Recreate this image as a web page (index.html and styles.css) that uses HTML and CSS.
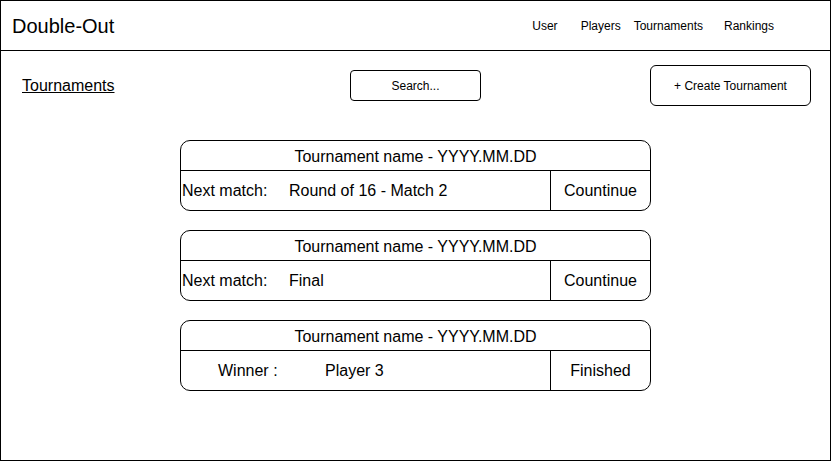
FILE: index.html
```html
<!DOCTYPE html>
<html>
<head>
<meta charset="utf-8">
<link rel="stylesheet" href="styles.css">
</head>
<body>
<div class="frame">
  <header class="topbar">
    <div class="brand">Double-Out</div>
    <nav class="nav">
      <span class="nav-item nav-user">User</span>
      <span class="nav-item nav-players">Players</span>
      <span class="nav-item nav-tournaments">Tournaments</span>
      <span class="nav-item">Rankings</span>
    </nav>
  </header>
  <div class="toolbar">
    <a class="page-link">Tournaments</a>
    <div class="search">Search...</div>
    <div class="create">+ Create Tournament</div>
  </div>
  <main class="list">
    <div class="card">
      <div class="card-title">Tournament name - YYYY.MM.DD</div>
      <div class="card-row">
        <div class="card-info">
          <span class="label">Next match:</span>
          <span class="value">Round of 16 - Match 2</span>
        </div>
        <div class="card-action">Countinue</div>
      </div>
    </div>
    <div class="card">
      <div class="card-title">Tournament name - YYYY.MM.DD</div>
      <div class="card-row">
        <div class="card-info">
          <span class="label">Next match:</span>
          <span class="value">Final</span>
        </div>
        <div class="card-action">Countinue</div>
      </div>
    </div>
    <div class="card">
      <div class="card-title">Tournament name - YYYY.MM.DD</div>
      <div class="card-row">
        <div class="card-info card-info-winner">
          <span class="label">Winner :</span>
          <span class="value">Player 3</span>
        </div>
        <div class="card-action">Finished</div>
      </div>
    </div>
  </main>
</div>
</body>
</html>
```
FILE: styles.css
```css
* { box-sizing: border-box; }
html, body { margin: 0; padding: 0; background: #fff; }
body {
  font-family: "Liberation Sans", Arial, Helvetica, sans-serif;
  color: #000;
}
.frame {
  width: 831px;
  height: 461px;
  border: 1px solid #000;
  background: #fff;
}
.topbar {
  height: 50px;
  border-bottom: 1px solid #000;
  display: flex;
  align-items: center;
  padding-left: 11px;
}
.brand {
  font-size: 20px;
  line-height: 24px;
}
.nav {
  display: flex;
  align-items: center;
  margin-left: 418px;
  font-size: 12px;
  line-height: 14px;
  margin-top: 1px;
}
.nav-user { margin-right: 23px; }
.nav-players { margin-right: 13px; }
.nav-tournaments { margin-right: 21px; }

.toolbar {
  display: grid;
  grid-template-columns: 328px 300px 161px;
  align-items: center;
  padding: 14px 0 0 21px;
}
.page-link {
  font-size: 16px;
  line-height: 18px;
  text-decoration: underline;
  color: #000;
}
.search {
  width: 131px;
  height: 31px;
  border: 1px solid #000;
  border-radius: 4px;
  display: flex;
  align-items: center;
  justify-content: center;
  font-size: 12px;
}
.create {
  width: 161px;
  height: 41px;
  border: 1px solid #000;
  border-radius: 6px;
  display: flex;
  align-items: center;
  justify-content: center;
  font-size: 12px;
}

.list {
  display: flex;
  flex-direction: column;
  align-items: center;
  gap: 19px;
  padding-top: 34px;
}
.card {
  width: 471px;
  border: 1px solid #000;
  border-radius: 10px;
  font-size: 16px;
}
.card-title {
  height: 30px;
  border-bottom: 1px solid #000;
  display: flex;
  align-items: center;
  justify-content: center;
  padding-top: 2px;
}
.card-row {
  height: 39px;
  display: flex;
}
.card-info {
  width: 370px;
  border-right: 1px solid #000;
  display: flex;
  align-items: center;
  padding-left: 1px;
}
.card-info-winner { padding-left: 37px; }
.label {
  width: 107px;
  flex: none;
}
.card-action {
  flex: 1;
  display: flex;
  align-items: center;
  justify-content: center;
}
```
